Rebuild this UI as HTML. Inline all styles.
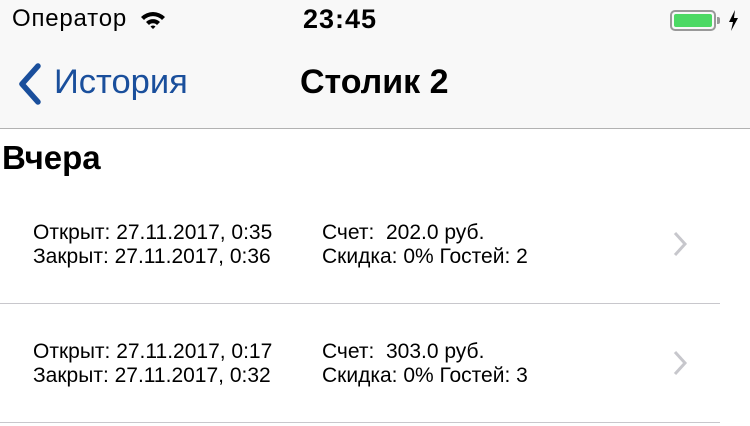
<!DOCTYPE html><html><head><meta charset="utf-8"><style>
*{margin:0;padding:0;box-sizing:border-box}
body{width:750px;height:426px;overflow:hidden;background:#fff;font-family:"Liberation Sans",sans-serif;position:relative;color:#000}
.nav{position:absolute;left:0;top:0;width:750px;height:129px;background:#f8f8f8;border-bottom:1px solid #b2b2b2}
.a{position:absolute;white-space:nowrap}
.row{position:absolute;font-size:21px;line-height:24px}
.sep{position:absolute;left:0;width:720px;height:1px;background:#c8c7cc}
</style></head><body>
<div class="nav">
<div class="a" style="left:12px;top:5px;font-size:24px;letter-spacing:0.8px">Оператор</div>
<svg class="a" style="left:140px;top:10px" width="26" height="20" viewBox="0 0 26 20"><path d="M1 7A17 17 0 0 1 25 7L22 10A12.5 12.5 0 0 0 4 10Z M6 12A10 10 0 0 1 20 12L17 15A5.5 5.5 0 0 0 9 15Z M10.5 16.5A3.5 3.5 0 0 1 15.5 16.5L13 19Z" fill="#000"/></svg>
<div class="a" style="left:303px;top:4px;font-size:27px;font-weight:bold;letter-spacing:1px">23:45</div>
<div class="a" style="left:670px;top:10px;width:46px;height:21px;border:2px solid #999;border-radius:5px;padding:2px"><div style="width:100%;height:100%;background:#4cd964;border-radius:2px"></div></div>
<div class="a" style="left:717px;top:17px;width:3px;height:7px;background:#999;border-radius:0 2px 2px 0"></div>
<svg class="a" style="left:728px;top:10px" width="11" height="21" viewBox="0 0 11 21"><path d="M7 0L1 12H5L3 21L10 8H6Z" fill="#000"/></svg>
<svg class="a" style="left:16px;top:63px" width="28" height="42" viewBox="0 0 28 42"><path d="M22 3L6 21L22 39" stroke="#1a4f9c" stroke-width="5.5" fill="none" stroke-linecap="round" stroke-linejoin="round"/></svg>
<div class="a" style="left:54px;top:63px;font-size:34.5px;color:#1a4f9c">История</div>
<div class="a" style="left:300px;top:63px;font-size:34px;font-weight:bold">Столик 2</div>
</div>
<div class="a" style="left:2px;top:139px;font-size:33px;font-weight:bold">Вчера</div>
<div class="row" style="left:33px;top:221px">Открыт: 27.11.2017, 0:35<br>Закрыт: 27.11.2017, 0:36</div>
<div class="row" style="left:322px;top:221px">Счет:&nbsp; 202.0 руб.<br>Скидка: 0% Гостей: 2</div>
<svg class="a" style="left:671px;top:230px" width="20" height="28" viewBox="0 0 20 28"><path d="M4 3L14 14L4 25" stroke="#c7c7cc" stroke-width="3" fill="none"/></svg>
<div class="sep" style="top:303px"></div>
<div class="row" style="left:33px;top:340px">Открыт: 27.11.2017, 0:17<br>Закрыт: 27.11.2017, 0:32</div>
<div class="row" style="left:322px;top:340px">Счет:&nbsp; 303.0 руб.<br>Скидка: 0% Гостей: 3</div>
<svg class="a" style="left:671px;top:349px" width="20" height="28" viewBox="0 0 20 28"><path d="M4 3L14 14L4 25" stroke="#c7c7cc" stroke-width="3" fill="none"/></svg>
<div class="sep" style="top:422px"></div>
</body></html>
